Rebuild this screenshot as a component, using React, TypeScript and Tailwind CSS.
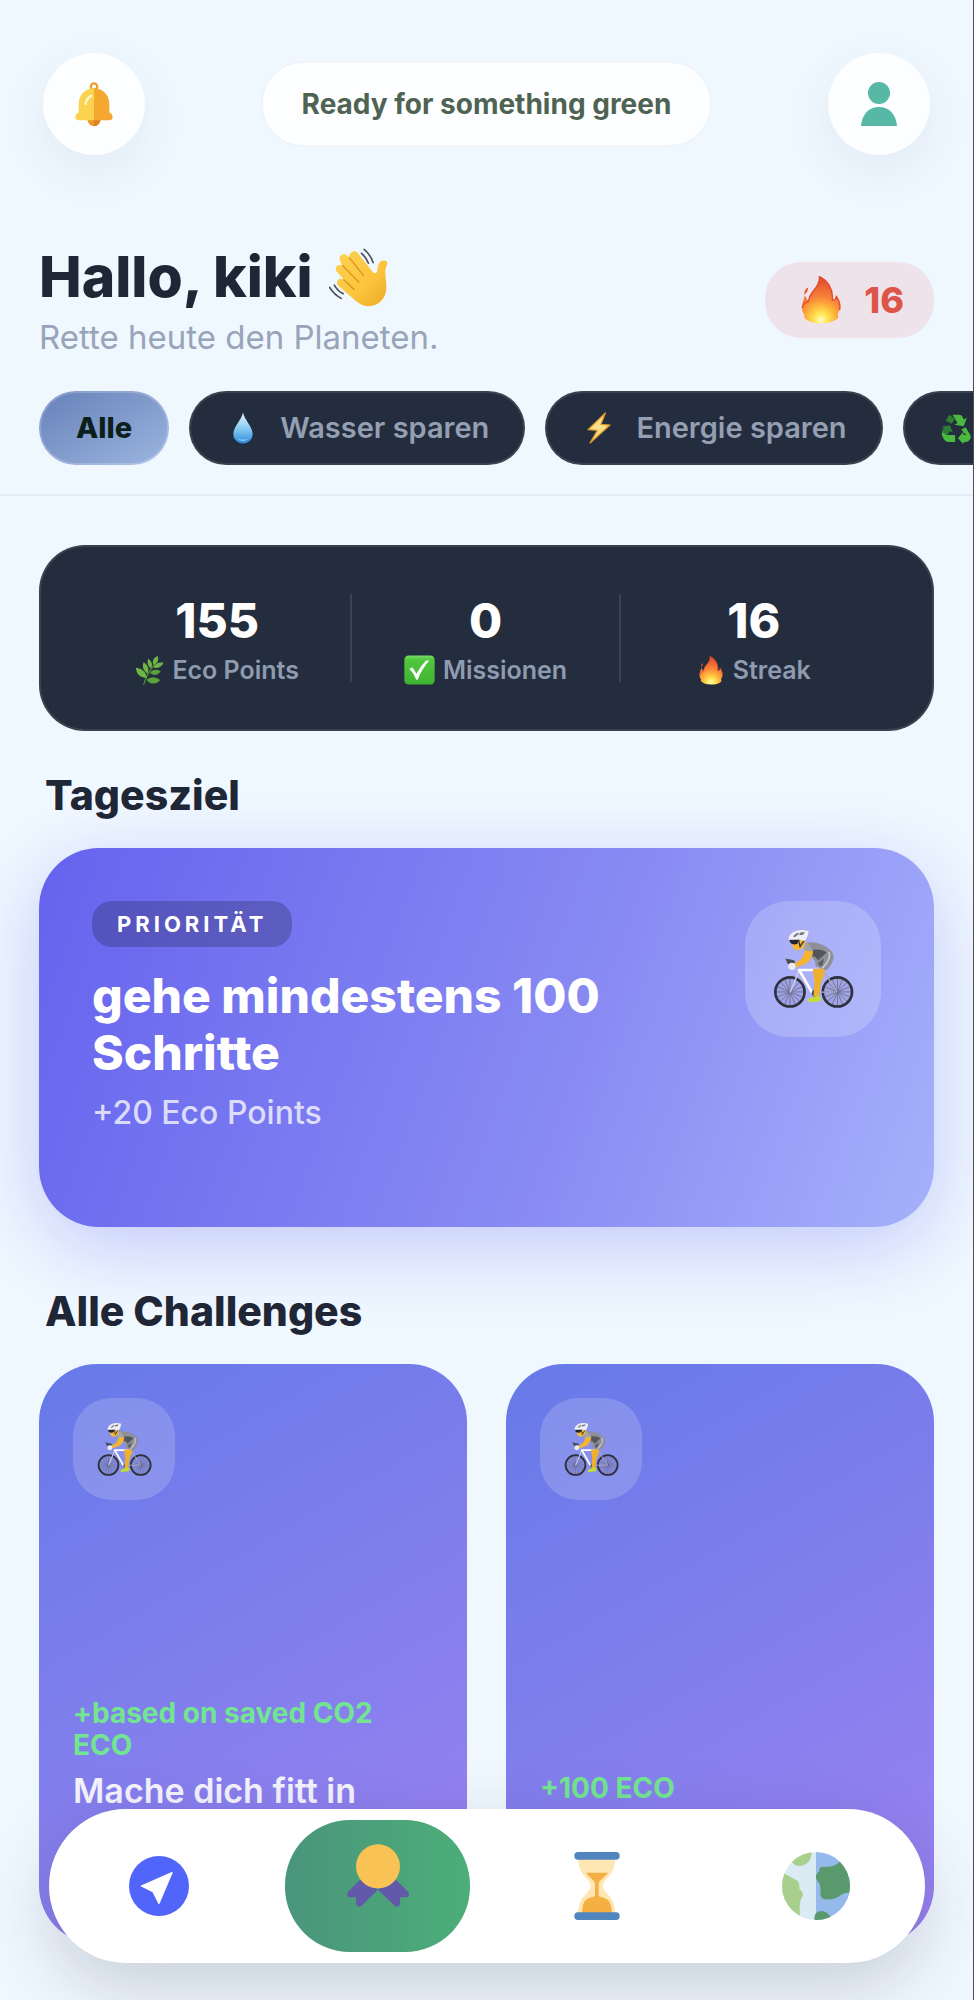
import type { ReactNode } from "react";

function BellIcon() {
  return (
    <svg viewBox="106 96 114 134" className="h-[45px] w-[38px]" aria-hidden="true">
      <circle cx="163" cy="109" r="9.5" fill="none" stroke="#eda02b" strokeWidth="7" />
      <path d="M143 208H183Q180 228 163 228Q146 228 143 208Z" fill="#eb9a2b" />
      <path d="M163 208H183Q180 228 163 228Z" fill="#dd8526" />
      <path d="M163 114C135 114 117 135 117 162V187C108 190 105 200 109 207Q111 210 118 210H163Z" fill="#fbd34e" />
      <path d="M163 114C191 114 209 135 209 162V187C218 190 221 200 217 207Q215 210 208 210H163Z" fill="#f5a830" />
      <path d="M138 161Q140 144 155 137" fill="none" stroke="#fff4cf" strokeWidth="7" strokeLinecap="round" />
    </svg>
  );
}

function PersonIcon() {
  return (
    <svg viewBox="0 0 36 44" className="h-11 w-9" aria-hidden="true">
      <circle cx="18" cy="11" r="11" fill="#57b8a5" />
      <path d="M0 44C1 32 8 25 18 25S35 32 36 44Z" fill="#57b8a5" />
    </svg>
  );
}

function WaveIcon() {
  return (
    <svg viewBox="984 78 178 178" className="size-[59px]" aria-hidden="true">
      <defs>
        <linearGradient id="hand" x1="0" y1="0" x2="1" y2="1">
          <stop offset="0" stopColor="#fed24f" />
          <stop offset="0.6" stopColor="#fbc43c" />
          <stop offset="1" stopColor="#eda827" />
        </linearGradient>
      </defs>
      <path
        d="M1050 93C1056 86 1065 87 1071 93L1113 147C1119 156 1128 157 1130 147C1130 133 1135 117 1148 116C1159 115 1162 122 1158 131C1149 150 1158 172 1157 202C1155 234 1130 255 1100 254C1081 252 1066 239 1051 226L1013 193C1006 186 1007 177 1013 172C1018 169 1023 171 1029 174L1007 149C1002 142 1004 134 1011 130C1015 128 1020 129 1025 132L1019 120C1014 112 1015 103 1022 98C1029 95 1036 97 1040 102L1046 108C1043 103 1045 97 1050 93Z"
        fill="url(#hand)"
      />
      <path
        d="M1046 108L1088 161M1025 131L1074 181M1029 174L1060 203"
        fill="none"
        stroke="#d99420"
        strokeWidth="4"
        strokeLinecap="round"
      />
      <path
        d="M1090 82Q1110 99 1117 122M1082 94Q1097 107 1103 124M986 197Q1000 219 1021 230M1000 190Q1010 208 1027 216"
        fill="none"
        stroke="#4a505c"
        strokeWidth="5"
        strokeLinecap="round"
      />
    </svg>
  );
}

function FireIcon({ className }: { className: string }) {
  return (
    <svg viewBox="980 165 120 145" className={className} aria-hidden="true">
      <defs>
        <radialGradient id="flame" gradientUnits="userSpaceOnUse" cx="1040" cy="297" r="118">
          <stop offset="0" stopColor="#fffbd0" />
          <stop offset="0.14" stopColor="#ffec5c" />
          <stop offset="0.36" stopColor="#fdb83a" />
          <stop offset="0.6" stopColor="#f8813a" />
          <stop offset="1" stopColor="#e5502f" />
        </radialGradient>
      </defs>
      <path
        d="M1035 167C1060 178 1078 205 1074 238C1082 239 1086 233 1086 226C1096 240 1099 255 1096 268L1091 280L1092 292C1080 303 1062 308 1040 308C1018 308 1000 302 989 290L990 282C984 276 983 268 983 260C983 245 989 236 991 224C996 230 997 238 1003 240C1003 212 1039 200 1035 167Z"
        fill="url(#flame)"
      />
      <path d="M989 222Q989 205 1001 200Q1001 214 989 222Z" fill="#e65a34" />
      <path
        d="M983 262C988 240 993 250 1003 240C1003 212 1039 200 1035 167C1060 178 1078 205 1074 238C1082 239 1086 233 1086 226C1096 240 1099 255 1096 268"
        fill="none"
        stroke="#e14b28"
        strokeWidth="4"
        strokeLinejoin="round"
      />
    </svg>
  );
}

function DropIcon() {
  return (
    <svg viewBox="703 578 60 95" className="h-8 w-5" aria-hidden="true">
      <defs>
        <linearGradient id="drop" x1="0" y1="0" x2="0" y2="1">
          <stop offset="0" stopColor="#e3f5fd" />
          <stop offset="0.5" stopColor="#8bcdf3" />
          <stop offset="1" stopColor="#2c8bdc" />
        </linearGradient>
      </defs>
      <path d="M733 579C738 603 762 621 762 644A29 28 0 0 1 704 644C704 621 728 603 733 579Z" fill="url(#drop)" />
      <path d="M716 656Q733 673 750 656Q733 665 716 656Z" fill="#9adcf8" />
    </svg>
  );
}

function BoltIcon() {
  return (
    <svg viewBox="342 575 73 98" className="h-8 w-6" aria-hidden="true">
      <path
        d="M398 578L345 629L374 631L351 670L412 615L384 613Z"
        fill="#fbe08a"
        stroke="#dd9a2c"
        strokeWidth="4"
        strokeLinejoin="round"
      />
    </svg>
  );
}

function RecycleIcon() {
  return (
    <svg viewBox="1406 578 92 92" className="size-[31px]" aria-hidden="true">
      <g fill="#49b93f">
        <path d="M1434 583H1461Q1466 583 1469 588L1474 597L1483 592L1473 617L1446 613L1455 608L1440 583Z" />
        <path d="M1479 620L1493 643Q1496 650 1492 657Q1488 664 1480 664H1473V671L1456 653L1473 634V643H1481L1466 627Z" />
        <path d="M1448 643V664H1428Q1419 664 1415 657L1409 645Q1407 640 1410 634L1424 643Z" />
      </g>
      <g fill="#2f7d34">
        <path d="M1432 584L1447 595L1438 610L1420 601L1427 589Q1429 585 1432 584Z" />
        <path d="M1408 619L1432 614L1441 636L1432 632L1424 644L1408 634L1414 623Z" />
      </g>
    </svg>
  );
}

function LeafIcon() {
  return (
    <svg viewBox="46 228 86 88" className="size-[29px]" aria-hidden="true">
      <path d="M71 315Q80 284 112 243" fill="none" stroke="#4f8f34" strokeWidth="4" />
      <g fill="#6fb545">
        <path d="M81 295C60 294 48 282 48 264C66 266 80 278 81 295Z" />
        <path d="M83 282C70 272 66 260 71 247C84 254 90 268 83 282Z" />
        <path d="M93 266C83 256 81 246 85 236C96 243 100 256 93 266Z" />
        <path d="M101 255C96 244 101 233 114 228C118 240 114 250 101 255Z" />
        <path d="M101 263C105 250 116 246 131 248C128 260 116 267 101 263Z" />
      </g>
      <g fill="#5aa23c">
        <path d="M91 280C97 269 110 267 123 274C115 286 103 289 91 280Z" />
        <path d="M80 300C92 289 108 290 122 301C110 315 92 316 80 300Z" />
      </g>
    </svg>
  );
}

function CheckIcon() {
  return (
    <svg viewBox="855 228 93 89" className="h-[30px] w-[31px]" aria-hidden="true">
      <defs>
        <linearGradient id="check" x1="0" y1="0" x2="0" y2="1">
          <stop offset="0" stopColor="#7bdd6a" />
          <stop offset="0.15" stopColor="#4fc73c" />
          <stop offset="1" stopColor="#3fb331" />
        </linearGradient>
      </defs>
      <rect x="856" y="229" width="91" height="87" rx="13" fill="url(#check)" />
      <path d="M871 269L880 265Q888 273 892 284Q905 260 921 244L931 244Q908 270 896 302L892 302Q884 282 871 269Z" fill="#fff" />
    </svg>
  );
}

function CyclistIcon({ className }: { className: string }) {
  return (
    <svg viewBox="126 120 244 240" className={className} aria-hidden="true">
      <g fill="#7a7bb0" fillOpacity="0.25">
        <circle cx="177" cy="309" r="45" />
        <circle cx="320" cy="309" r="45" />
      </g>
      <g fill="none" stroke="#5c5d74" strokeWidth="2">
        <path d="M177 265V353M133 309H221M146 278L208 340M208 278L146 340M160 268L194 350M194 268L160 350M136 292L218 326M218 292L136 326" />
        <path d="M320 265V353M276 309H364M289 278L351 340M351 278L289 340M303 268L337 350M337 268L303 350M279 292L361 326M361 292L279 326" />
      </g>
      <g fill="none" stroke="#2e303c" strokeWidth="8">
        <circle cx="177" cy="309" r="44" />
        <circle cx="320" cy="309" r="44" />
      </g>
      <path d="M320 309L276 243L250 310L320 309" fill="none" stroke="#a9abc4" strokeWidth="4" strokeLinejoin="round" />
      <path d="M178 309L204 246" fill="none" stroke="#c9cce0" strokeWidth="5" strokeLinecap="round" />
      <path d="M204 243H264M206 245L242 308" fill="none" stroke="#fff" strokeWidth="8" strokeLinecap="round" />
      <circle cx="254" cy="313" r="11" fill="#4b4d58" />
      <path d="M231 331L262 318L271 327Q271 336 262 338L232 340Z" fill="#c4dc38" />
      <path d="M246 240L284 238Q278 270 270 282L265 322H248L251 282Z" fill="#efb02f" />
      <path d="M222 162C250 153 286 168 303 187C315 204 307 224 286 244L254 231C256 215 248 207 233 200Z" fill="#8f9097" />
      <path d="M247 182C264 180 280 184 288 190L262 214C256 206 254 203 243 200Z" fill="#54565f" />
      <path d="M262 222L280 208L276 226L268 234Z" fill="#5d5f68" />
      <path d="M294 188Q304 207 275 238" fill="none" stroke="#c9cad0" strokeWidth="5" />
      <path d="M163 208L190 214L193 221L171 226Z" fill="#494b56" />
      <path d="M223 182L247 187Q244 211 228 222L195 236L190 224L213 208Z" fill="#f2b432" />
      <circle cx="183" cy="232" r="11" fill="#ececf0" />
      <path d="M220 165L229 160L248 186L219 184Z" fill="#a3a4aa" />
      <path d="M180 152H223Q225 171 213 179Q200 188 189 179Q181 169 180 152Z" fill="#f4b733" />
      <path d="M175 152L203 151L200 164Q186 169 178 161Z" fill="#22242c" />
      <path d="M203 151L208 175M221 152L208 172" fill="none" stroke="#33353f" strokeWidth="4" />
      <path d="M173 152C174 128 204 117 233 126C232 140 227 151 220 156L205 151Z" fill="#eeeff4" />
      <path d="M186 141L199 131L205 133L192 144ZM207 131L222 128L217 137L205 138Z" fill="#757782" />
    </svg>
  );
}

function PlaneIcon() {
  return (
    <svg viewBox="85 108 180 180" className="size-[60px]" aria-hidden="true">
      <circle cx="175" cy="198" r="90" fill="#5265fb" />
      <path
        d="M214 158L122 198L157 215L175 250Z"
        fill="#fff"
        stroke="#fff"
        strokeWidth="4"
        strokeLinejoin="round"
      />
    </svg>
  );
}

function MedalIcon() {
  return (
    <svg viewBox="736 74 190 192" className="size-16" aria-hidden="true">
      <g fill="#6259ab">
        <path d="M780 178L741 217Q733 233 748 234H765V252Q768 267 780 261L831 211Z" />
        <path d="M882 178L921 217Q929 233 914 234H897V252Q894 267 882 261L831 211Z" />
      </g>
      <circle cx="831" cy="141" r="66" fill="#f8c354" />
    </svg>
  );
}

function HourglassIcon() {
  return (
    <svg viewBox="101 96 138 204" className="h-[68px] w-[46px]" aria-hidden="true">
      <path
        d="M113 112H225C226 168 188 175 188 198C188 221 226 226 225 284H113C112 226 151 221 151 198C151 175 112 168 113 112Z"
        fill="#fee7b4"
      />
      <path
        d="M137 158H203C192 175 175 180 175 192V224C176 234 190 229 202 239Q215 250 215 280H125Q125 250 137 239C149 229 163 234 164 224V192C164 180 148 175 137 158Z"
        fill="#f5b044"
      />
      <rect x="102" y="96" width="136" height="23" rx="11" fill="#5085bd" />
      <rect x="102" y="277" width="136" height="23" rx="11" fill="#5085bd" />
    </svg>
  );
}

function GlobeIcon() {
  return (
    <svg viewBox="724 96 204 204" className="size-[68px]" aria-hidden="true">
      <defs>
        <clipPath id="globe">
          <circle cx="826" cy="198" r="102" />
        </clipPath>
      </defs>
      <g clipPath="url(#globe)">
        <path d="M724 96H826V300H724Z" fill="#daebf4" />
        <path d="M826 96H928V300H826Z" fill="#96b9ec" />
        <path d="M752 124Q768 147 795 133Q813 122 814 90H752Z" fill="#a8cf8c" />
        <path d="M715 152L770 182Q778 188 776 206Q793 220 783 233Q774 245 779 305H715Z" fill="#a8cf8c" />
        <path
          d="M900 122Q882 144 846 140Q834 142 836 153Q817 168 832 185Q842 194 839 220Q840 242 862 238Q885 240 904 223Q915 216 935 218V122Z"
          fill="#5a996e"
        />
        <path d="M823 305Q815 274 845 273Q860 274 878 300V305Z" fill="#5a996e" />
      </g>
    </svg>
  );
}

const filters: { label: string; icon: ReactNode }[] = [
  { label: "Wasser sparen", icon: <DropIcon /> },
  { label: "Energie sparen", icon: <BoltIcon /> },
];

const stats: { value: number; label: string; icon: ReactNode }[] = [
  { value: 155, label: "Eco Points", icon: <LeafIcon /> },
  { value: 0, label: "Missionen", icon: <CheckIcon /> },
  { value: 16, label: "Streak", icon: <FireIcon className="h-[29px] w-7" /> },
];

const challenges = [
  { reward: "+based on saved CO2 ECO", title: "Mache dich fitt in", titleSize: "min-h-[141px]" },
  { reward: "+100 ECO", title: "", titleSize: "min-h-[98px]" },
];

const tabs: { label: string; icon: ReactNode; active?: boolean }[] = [
  { label: "Entdecken", icon: <PlaneIcon /> },
  { label: "Challenges", icon: <MedalIcon />, active: true },
  { label: "Verlauf", icon: <HourglassIcon /> },
  { label: "Welt", icon: <GlobeIcon /> },
];

const roundButton =
  "flex size-[102px] items-center justify-center rounded-full bg-[#fcfeff] shadow-[0_16px_50px_rgba(30,41,80,0.07)]";
const chip = "flex h-[74px] shrink-0 items-center rounded-full border-2 text-[29px] leading-8";
const sectionTitle = "px-1.5 text-[41px] leading-[48px] font-extrabold text-[#1f2635]";

export default function App() {
  return (
    <div className="min-h-screen overflow-x-hidden border-r border-[#4b4f57] bg-[#f0f8ff] font-['Inter',sans-serif] text-[#1f2635]">
      <header className="border-b-2 border-[#e2eaf3] pt-[53px] pb-[29px]">
        <div className="flex items-center justify-between px-[43px]">
          <button type="button" aria-label="Benachrichtigungen" className={roundButton}>
            <BellIcon />
          </button>
          <div className="flex h-[86px] items-center rounded-[42px] border-2 border-[#eef4f9] bg-[#fdfeff] px-[39px] text-[28px] leading-8 font-bold text-[#4f6353]">
            Ready for something green
          </div>
          <button type="button" aria-label="Profil" className={roundButton}>
            <PersonIcon />
          </button>
        </div>

        <div className="mt-[92px] flex items-start justify-between px-[39px]">
          <div>
            <h1 className="flex items-center gap-4 text-[57px] leading-[60px] font-extrabold">
              Hallo, kiki <WaveIcon />
            </h1>
            <p className="mt-2.5 text-[33px] leading-10 text-[#98a4b9]">Rette heute den Planeten.</p>
          </div>
          <div className="mt-[15px] flex h-[76px] items-center gap-5 rounded-[36px] bg-[#efe3eb] pr-[30px] pl-[33px] text-4xl font-extrabold text-[#dd5549]">
            <span className="flex w-[46px] justify-center">
              <FireIcon className="h-12 w-10" />
            </span>
            16
          </div>
        </div>

        <div className="mt-[34px] flex gap-5 overflow-hidden pl-[39px]">
          <button
            type="button"
            className={`${chip} border-white/20 bg-linear-to-br from-[#6681b8] to-[#9cb5e0] bg-origin-border px-[35px] font-extrabold text-[#0c1f1a]`}
          >
            Alle
          </button>
          {filters.map((f) => (
            <button
              key={f.label}
              type="button"
              className={`${chip} gap-[19px] border-white/10 bg-[#242d3d] px-[34px] font-semibold text-[#949fb4]`}
            >
              <span className="flex w-9 justify-center">{f.icon}</span>
              {f.label}
            </button>
          ))}
          <button
            type="button"
            aria-label="Recycling"
            className={`${chip} w-72 border-white/10 bg-[#242d3d] px-9`}
          >
            <RecycleIcon />
          </button>
        </div>
      </header>

      <main className="px-[39px] pt-[49px] pb-14">
        <section className="grid grid-cols-3 rounded-[46px] border-2 border-white/10 bg-[#242d3d] bg-clip-border px-[43px] py-[47px]">
          {stats.map((s) => (
            <div key={s.label} className="border-r-2 border-[#3a4352] pt-0.5 text-center last:border-transparent">
              <div className="text-5xl leading-[50px] font-extrabold text-white">{s.value}</div>
              <div className="mt-3 flex h-6 items-center justify-center gap-2 text-[25px] leading-6 font-semibold text-[#8f9bb0]">
                {s.icon}
                {s.label}
              </div>
            </div>
          ))}
        </section>

        <h2 className={`${sectionTitle} mt-10`}>Tagesziel</h2>
        <section className="mt-[29px] flex min-h-[379px] items-start justify-between rounded-[60px] bg-linear-[110deg] from-[#6563ee] via-[#898bf3] via-60% to-[#a5b1fb] p-[53px] shadow-[0_20px_80px_rgba(99,102,241,0.32)]">
          <div className="max-w-[540px]">
            <span className="inline-flex h-[46px] items-center rounded-[20px] bg-black/20 px-[25px] text-[22px] font-bold tracking-[4px] text-white">
              PRIORITÄT
            </span>
            <h3 className="mt-5 text-5xl leading-[57px] font-extrabold text-white">gehe mindestens 100 Schritte</h3>
            <p className="mt-3 text-[32px] leading-10 font-medium text-white/75">+20 Eco Points</p>
          </div>
          <div className="flex size-[136px] shrink-0 items-center justify-center rounded-[44px] bg-white/20">
            <CyclistIcon className="h-20 w-[81px]" />
          </div>
        </section>

        <h2 className={`${sectionTitle} mt-[60px]`}>Alle Challenges</h2>
        <div className="mt-[29px] grid grid-cols-2 gap-[39px]">
          {challenges.map((c) => (
            <article
              key={c.reward}
              className="flex min-h-[580px] flex-col justify-between rounded-[58px] bg-linear-[150deg] from-[#667ae8] to-[#9c82f1] p-[34px]"
            >
              <div className="flex size-[102px] items-center justify-center rounded-[38px] bg-white/17">
                <CyclistIcon className="size-[55px]" />
              </div>
              <div>
                <p className="text-[28px] leading-8 font-bold text-[#72e591]">{c.reward}</p>
                <h3 className={`mt-2 text-[34px] leading-[43px] font-semibold text-white/90 ${c.titleSize}`}>
                  {c.title}
                </h3>
              </div>
            </article>
          ))}
        </div>
      </main>

      <nav className="fixed inset-x-[49px] bottom-[37px] grid grid-cols-4 rounded-[77px] bg-white py-[11px] shadow-[0_24px_70px_rgba(15,23,42,0.18)]">
        {tabs.map((t) => (
          <a
            key={t.label}
            href={`#${t.label.toLowerCase()}`}
            aria-label={t.label}
            aria-current={t.active ? "page" : undefined}
            className={
              t.active
                ? "mx-[17px] flex h-[132px] justify-center rounded-[65px] bg-linear-to-r from-[#4a957c] to-[#4cae78] pt-6"
                : "mx-[17px] flex h-[132px] items-center justify-center rounded-[65px]"
            }
          >
            {t.icon}
          </a>
        ))}
      </nav>
    </div>
  );
}
